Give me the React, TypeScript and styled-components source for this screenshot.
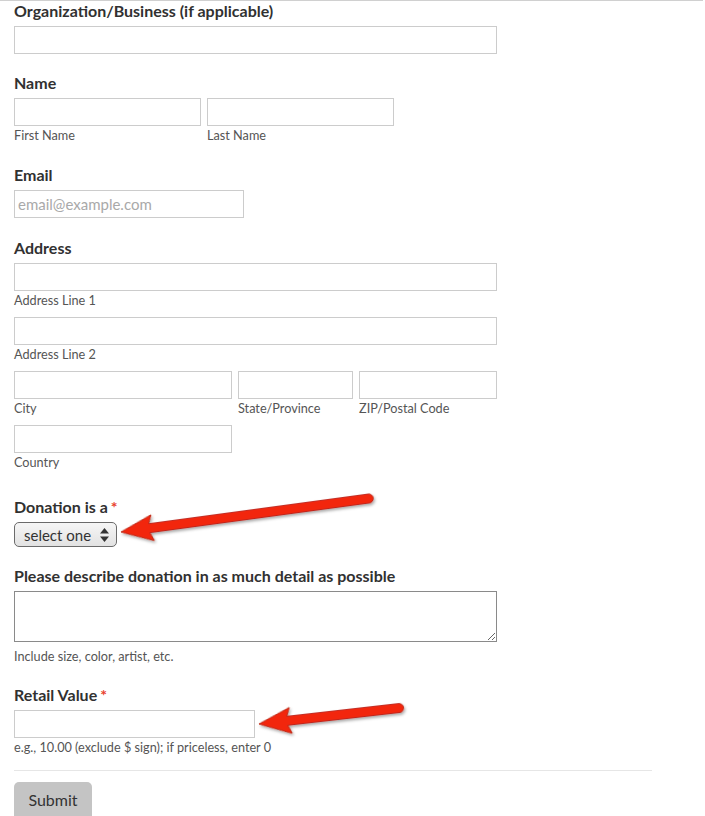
import React from "react";
import styled, { createGlobalStyle } from "styled-components";

const Global = createGlobalStyle`
  html, body { margin: 0; padding: 0; background: #fff; }
  body { font-family: Lato, "Liberation Sans", sans-serif; color: #333; }
  * { box-sizing: border-box; }
`;

const Page = styled.div`
  position: relative;
  width: 703px;
  min-height: 816px;
  border-top: 1px solid #d0d0d0;
`;

const Form = styled.form`
  display: flex;
  flex-direction: column;
  padding-left: 14px;
`;

const Field = styled.div<{ $mt: number }>`
  display: flex;
  flex-direction: column;
  align-items: flex-start;
  margin-top: ${(p) => p.$mt}px;
`;

const Label = styled.div`
  font-size: 16px;
  font-weight: 700;
  line-height: 20px;
  color: #313131;
  margin-bottom: 5px;
`;

const Star = styled.span`
  color: #e8412c;
  margin-left: 3px;
`;

const TextInput = styled.input<{ $w: number }>`
  display: block;
  width: ${(p) => p.$w}px;
  height: 28px;
  border: 1px solid #cccccc;
  border-radius: 0;
  padding: 2px 3px;
  font-family: Lato, "Liberation Sans", sans-serif;
  font-size: 15px;
  color: #333;
  background: #fff;
  outline: none;
  &::placeholder { color: #a9a9a9; }
`;

const SubLabel = styled.div<{ $mt?: number }>`
  font-size: 12.7px;
  line-height: 19px;
  color: #555;
  margin-top: ${(p) => p.$mt ?? 0}px;
`;

const Row = styled.div`
  display: flex;
  gap: 6px;
`;

const Stack = styled.div<{ $gap?: number }>`
  display: flex;
  flex-direction: column;
  gap: ${(p) => p.$gap ?? 0}px;
`;

const Cell = styled.div`
  display: flex;
  flex-direction: column;
`;

const SelectWrap = styled.div`
  position: relative;
  width: 103px;
  height: 25px;
`;

const Select = styled.select`
  appearance: none;
  -webkit-appearance: none;
  width: 103px;
  height: 25px;
  border: 1px solid #6b6b6b;
  border-radius: 5px;
  background: linear-gradient(#f6f6f6, #e2e2e2);
  font-family: Lato, "Liberation Sans", sans-serif;
  font-size: 15px;
  color: #333;
  padding: 0 0 0 9px;
  outline: none;
`;

const SelectArrows = styled.svg`
  position: absolute;
  right: 8px;
  top: 6px;
  pointer-events: none;
`;

const TextArea = styled.textarea`
  display: block;
  width: 483px;
  height: 51px;
  border: 1px solid #8a8a8a;
  font-family: Lato, "Liberation Sans", sans-serif;
  font-size: 15px;
  resize: both;
  outline: none;
`;

const Divider = styled.hr`
  width: 638px;
  margin: 13px 0 0 0;
  border: none;
  border-top: 1px solid #e6e6e6;
  height: 0;
`;

const Submit = styled.button`
  margin-top: 11px;
  width: 78px;
  height: 40px;
  border: none;
  border-radius: 5px;
  background: #c4c4c4;
  color: #333;
  font-family: Lato, "Liberation Sans", sans-serif;
  font-size: 16px;
  text-align: center;
  padding: 0 0 5px 0;
  align-self: flex-start;
`;

const Overlay = styled.svg`
  position: absolute;
  left: 0;
  top: 0;
  pointer-events: none;
`;

function Arrow({ x, y, angle, len }: { x: number; y: number; angle: number; len: number }) {
  const d = `M0,0 L32,-13 L28.5,-4.5 L${len},-4.5 A4.5,4.5 0 0 1 ${len},4.5 L28.5,4.5 L32,13 Z`;
  return (
    <g transform={`translate(${x} ${y}) rotate(${angle})`} filter="url(#shadow)">
      <path d={d} fill="#f2270f" stroke="#b51a08" strokeWidth={0.8} strokeLinejoin="round" />
    </g>
  );
}

export default function App() {
  return (
    <>
      <Global />
      <Page>
        <Form onSubmit={(e) => e.preventDefault()}>
          <Field $mt={0}>
            <Label>Organization/Business (if applicable)</Label>
            <TextInput $w={483} />
          </Field>

          <Field $mt={19}>
            <Label>Name</Label>
            <Row>
              <Cell>
                <TextInput $w={187} />
                <SubLabel>First Name</SubLabel>
              </Cell>
              <Cell>
                <TextInput $w={187} />
                <SubLabel>Last Name</SubLabel>
              </Cell>
            </Row>
          </Field>

          <Field $mt={20}>
            <Label>Email</Label>
            <TextInput $w={230} placeholder="email@example.com" />
          </Field>

          <Field $mt={20}>
            <Label>Address</Label>
            <Stack $gap={7}>
              <Cell>
                <TextInput $w={483} />
                <SubLabel>Address Line 1</SubLabel>
              </Cell>
              <Cell>
                <TextInput $w={483} />
                <SubLabel>Address Line 2</SubLabel>
              </Cell>
              <Row>
                <Cell>
                  <TextInput $w={218} />
                  <SubLabel>City</SubLabel>
                </Cell>
                <Cell>
                  <TextInput $w={115} />
                  <SubLabel>State/Province</SubLabel>
                </Cell>
                <Cell>
                  <TextInput $w={138} />
                  <SubLabel>ZIP/Postal Code</SubLabel>
                </Cell>
              </Row>
              <Cell>
                <TextInput $w={218} />
                <SubLabel>Country</SubLabel>
              </Cell>
            </Stack>
          </Field>

          <Field $mt={25}>
            <Label>
              Donation is a<Star>*</Star>
            </Label>
            <SelectWrap>
              <Select defaultValue="">
                <option value="">select one</option>
              </Select>
              <SelectArrows width="9" height="14" viewBox="0 0 9 14">
                <path d="M4.5 0 L9 5.5 L0 5.5 Z" fill="#333" />
                <path d="M0 8.5 L9 8.5 L4.5 14 Z" fill="#333" />
              </SelectArrows>
            </SelectWrap>
          </Field>

          <Field $mt={19}>
            <Label>Please describe donation in as much detail as possible</Label>
            <TextArea />
            <SubLabel $mt={5}>Include size, color, artist, etc.</SubLabel>
          </Field>

          <Field $mt={19}>
            <Label>
              Retail Value<Star>*</Star>
            </Label>
            <TextInput $w={241} />
            <SubLabel>e.g., 10.00 (exclude $ sign); if priceless, enter 0</SubLabel>
          </Field>

          <Divider />
          <Submit type="submit">Submit</Submit>
        </Form>

        <Overlay width="705" height="816" viewBox="0 0 705 816">
          <defs>
            <filter id="shadow" x="-10%" y="-50%" width="120%" height="200%">
              <feDropShadow dx="1" dy="2" stdDeviation="1.5" floodColor="#000" floodOpacity="0.35" />
            </filter>
          </defs>
          <Arrow x={121} y={531} angle={-7.7} len={250} />
          <Arrow x={259} y={723} angle={-6.5} len={141} />
        </Overlay>
      </Page>
    </>
  );
}
